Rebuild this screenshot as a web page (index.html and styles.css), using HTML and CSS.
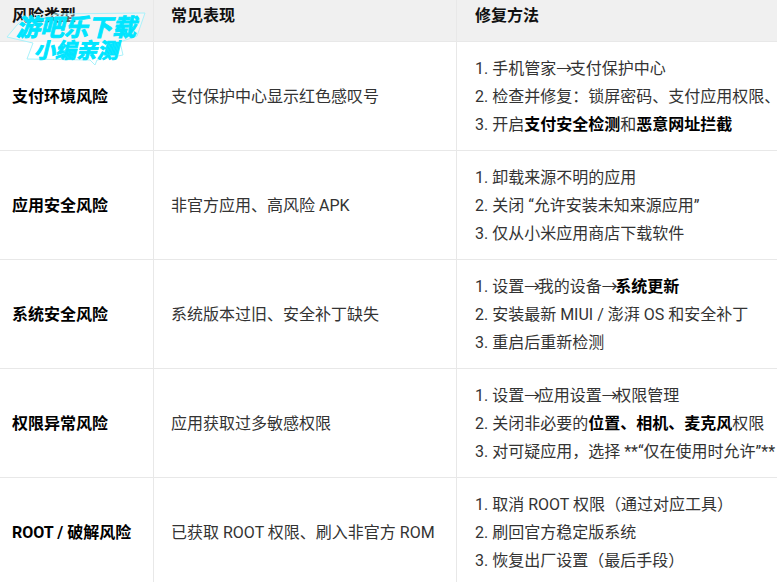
FILE: index.html
```html
<!DOCTYPE html>
<html lang="zh-CN">
<head>
<meta charset="utf-8">
<title>风险类型</title>
<link rel="stylesheet" href="styles.css">
</head>
<body>
<table class="risk">
<thead>
<tr><th class="c1">风险类型</th><th class="c2">常见表现</th><th class="c3">修复方法</th></tr>
</thead>
<tbody>
<tr>
<td><b>支付环境风险</b></td>
<td>支付保护中心显示红色感叹号</td>
<td>1. 手机管家<span class="arr">→</span>支付保护中心<br>2. 检查并修复：锁屏密码、支付应用权限、<br>3. 开启<b>支付安全检测</b>和<b>恶意网址拦截</b></td>
</tr>
<tr>
<td><b>应用安全风险</b></td>
<td>非官方应用、高风险 APK</td>
<td>1. 卸载来源不明的应用<br>2. 关闭 “允许安装未知来源应用”<br>3. 仅从小米应用商店下载软件</td>
</tr>
<tr>
<td><b>系统安全风险</b></td>
<td>系统版本过旧、安全补丁缺失</td>
<td>1. 设置<span class="arr">→</span>我的设备<span class="arr">→</span><b>系统更新</b><br>2. 安装最新 MIUI / 澎湃 OS 和安全补丁<br>3. 重启后重新检测</td>
</tr>
<tr>
<td><b>权限异常风险</b></td>
<td>应用获取过多敏感权限</td>
<td>1. 设置<span class="arr">→</span>应用设置<span class="arr">→</span>权限管理<br>2. 关闭非必要的<b>位置、相机、麦克风</b>权限<br>3. 对可疑应用，选择 **“仅在使用时允许”**</td>
</tr>
<tr>
<td><b>ROOT / 破解风险</b></td>
<td>已获取 ROOT 权限、刷入非官方 ROM</td>
<td>1. 取消 ROOT 权限（通过对应工具）<br>2. 刷回官方稳定版系统<br>3. 恢复出厂设置（最后手段）</td>
</tr>
</tbody>
</table>
<div class="mark">
<svg class="mark-bg" width="150" height="66" viewBox="0 0 150 66"><path d="M25 18 L50 17 L54 14 L145 13 L137 36 L120 42 L123 55 L97 60 L95 65 L90 60 L27 59 L33 43 L7 37 L17 25 Z" fill="#fff" fill-opacity=".35" stroke="#a9f2fb" stroke-width="1"/></svg>
<div class="mark-a">游吧乐下载</div>
<div class="mark-b">小编亲测</div>
</div>
</body>
</html>
```
FILE: styles.css
```css
html, body { margin: 0; padding: 0; height: 582px; overflow: hidden; background: #fff; }
body { font-family: Roboto, "Noto Sans CJK SC", sans-serif; font-size: 16px; line-height: 28px; color: #333; position: relative; }
.risk { border-collapse: collapse; table-layout: fixed; width: 900px; margin: -12px 0 0 -7px; }
.risk th, .risk td { padding: 13px 18px 11px; border: 1px solid #e8e8e8; text-align: left; vertical-align: middle; white-space: nowrap; overflow: hidden; }
.risk th:nth-child(2), .risk td:nth-child(2) { padding-left: 17px; }
.risk th { background: #f0f0f0; font-weight: 700; color: #111; }
.risk b { color: #000; font-weight: 700; }
.arr { letter-spacing: -2.5px; }
.c1 { width: 123px; }
.c2 { width: 267px; }
.mark { position: absolute; left: 0; top: 0; width: 150px; height: 66px; }
.mark-bg { position: absolute; left: 0; top: 0; }
.mark-a, .mark-b { position: absolute; font-weight: 700; color: #00e5ff; font-style: italic; white-space: nowrap; -webkit-text-stroke: .9px #00e5ff; }
.mark-a { left: 16px; top: 14px; font-size: 24px; line-height: 28px; }
.mark-b { left: 34px; top: 39px; font-size: 21px; line-height: 25px; }
```
